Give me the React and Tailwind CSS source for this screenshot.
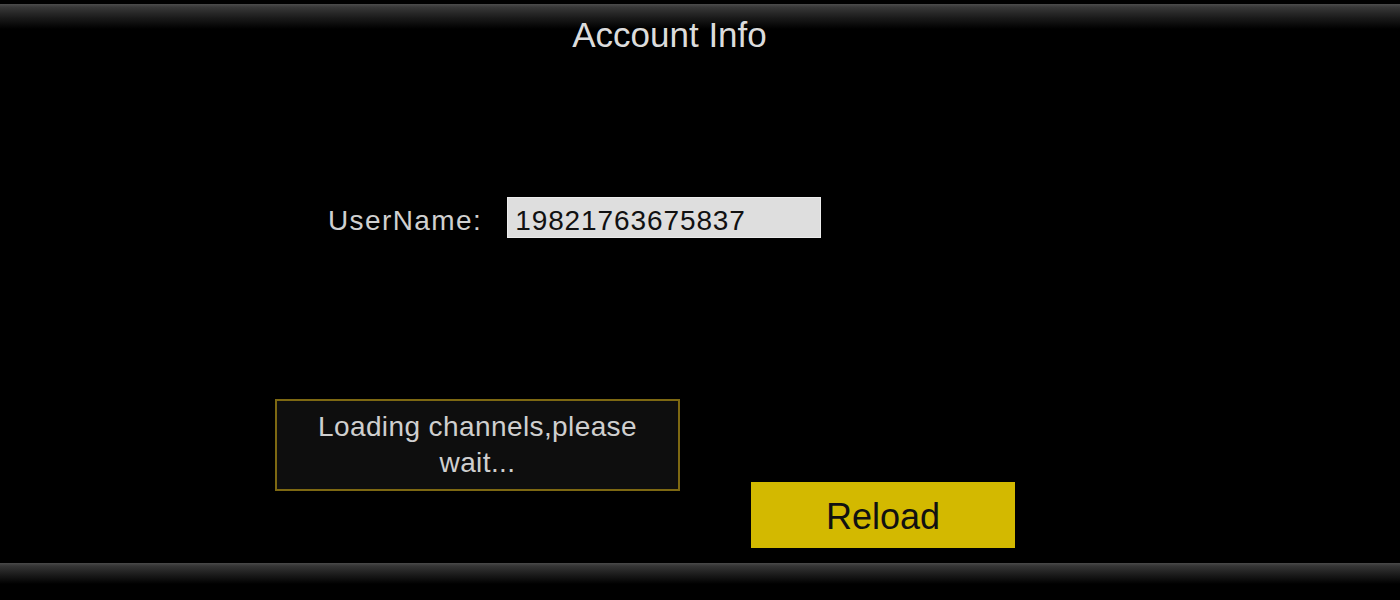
import React from "react";

const font = { fontFamily: '"Liberation Sans", Arial, sans-serif' };

function App() {
  return (
    <div className="w-[1400px] h-[600px] bg-black flex flex-col overflow-hidden" style={font}>
      <div className="pt-[4px]">
        <div className="h-[52px] bg-[linear-gradient(to_bottom,#4c4c4c_0px,#383838_3px,#1a1a1a_14px,#000_25px)] flex justify-center">
          <h1 className="text-[35px] leading-none text-[#dcdcdc] pt-[13px] ml-[-61px]">Account Info</h1>
        </div>
      </div>

      <div className="flex items-start h-[41px] mt-[141px] pl-[328px]">
        <span className="text-[28px] leading-[32px] tracking-[1.4px] text-[#d0d0d0] mt-[8px]">UserName:</span>
        <div className="ml-[25px] w-[314px] h-[41px] bg-[#dedede] border border-[#ececec] flex items-center px-[7px]">
          <span className="text-[28px] tracking-[0.9px] text-[#111] pt-[6px]">19821763675837</span>
        </div>
      </div>

      <div className="flex items-start mt-[161px] pl-[275px]">
        <div className="w-[405px] h-[92px] bg-[#0e0e0e] border-2 border-[#7d6812] flex items-center justify-center px-6">
          <p className="text-[28px] leading-[36px] tracking-[0.4px] text-[#cfcfcf] text-center">
            Loading channels,please wait...
          </p>
        </div>
        <button className="ml-[71px] mt-[83px] w-[264px] h-[66px] bg-[#d3b900] text-[#111] text-[36px] leading-none flex items-center justify-center pt-[4px]">
          Reload
        </button>
      </div>

      <div className="mt-auto h-[37px] bg-[linear-gradient(to_bottom,#4a4a4a_0px,#353535_3px,#1a1a1a_12px,#000_21px)]" />
    </div>
  );
}

export default App;
